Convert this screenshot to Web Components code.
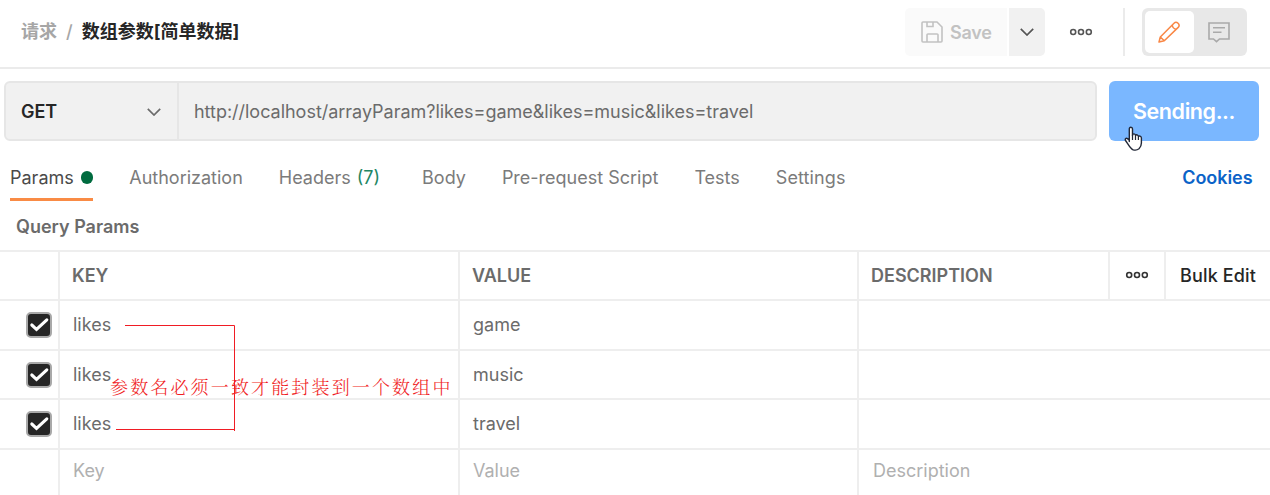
<!DOCTYPE html>
<html lang="zh-CN">
<head>
<meta charset="utf-8">
<title>数组参数</title>
<style>
html,body{margin:0;height:495px;overflow:hidden;background:#fff}
body{font:400 18px/24px Inter,"Noto Sans CJK SC",sans-serif;color:#6b6b6b}
</style>
</head>
<body>
<request-page></request-page>
<script>
const define = (name, css, html) => {
  const t = document.createElement('template');
  t.innerHTML = `<style>*{box-sizing:border-box}:host{box-sizing:border-box}${css}</style>${html}`;
  customElements.define(name, class extends HTMLElement {
    constructor() {
      super();
      this.attachShadow({ mode: 'open' }).appendChild(t.content.cloneNode(true));
    }
  });
};

define('more-dots', ':host{display:block;width:24px;height:10px}svg{display:block}',
  `<svg width="24" height="10" fill="none" stroke="currentColor" stroke-width="1.6"><circle cx="4.2" cy="5" r="2.5"/><circle cx="12" cy="5" r="2.5"/><circle cx="19.8" cy="5" r="2.5"/></svg>`);

define('chevron-icon', ':host{display:block;width:14px;height:8px}svg{display:block}',
  `<svg width="14" height="8" fill="none" stroke="currentColor" stroke-width="1.7"><path d="M.8.8 7 7 13.2.8"/></svg>`);

define('save-group', `
  :host{display:flex;width:140px;height:48px;border-radius:5px;overflow:hidden}
  .save{width:102px;background:#fafafa;color:#c2c2c2;display:flex;align-items:center;padding-left:16px;gap:7px;font-weight:600;letter-spacing:-.25px}
  .save span{padding-top:1px}
  .gap{width:2px;background:#fff}
  .drop{flex:1;background:#f1f1f1;color:#555;display:flex;align-items:center;justify-content:center}`,
  `<div class="save"><svg width="22" height="22" fill="none" stroke="currentColor" stroke-width="1.6"><path d="M2 1H16L21 6V20Q21 21 20 21H2Q1 21 1 20V2Q1 1 2 1ZM6 1V5.5H12V1M6 21V13.8Q6 13 7 13H16Q17 13 17 13.8V21"/></svg><span>Save</span></div><div class="gap"></div><div class="drop"><chevron-icon></chevron-icon></div>`);

define('mode-switch', `
  :host{display:flex;width:105px;height:48px;padding:3px;border-radius:6px;background:#e8e8e8}
  div{flex:1;display:flex;align-items:center;justify-content:center;border-radius:5px}
  .on{background:#fff;flex:none;width:49px;padding-right:2px}`,
  `<div class="on"><svg width="24" height="24" fill="none" stroke="#f98745" stroke-width="1.5" stroke-linejoin="round"><path d="M2 22 3.3 17 17 3.3C19.6.7 23.8 4.6 21.2 7.4L7.3 20.8ZM15.3 5Q15.6 8.7 19.3 9.2M3.3 17 7.3 20.8"/></svg></div>
   <div><svg width="22" height="22" fill="none" stroke="#a9a9a9" stroke-width="1.6"><path d="M1 2H21V18H11.5L8.5 20.7 5.5 18H1ZM5 6.8H17M5 11.3H13.5"/></svg></div>`);

define('request-header', `
  :host{display:flex;height:69px;border-bottom:2px solid #ebebeb;padding:8px 23px 0 21px;align-items:flex-start}
  .crumb{display:flex;font-weight:600;line-height:48px;font-size:18px;color:#a6a6a6;white-space:pre}
  .crumb i{font-style:normal;font-weight:500;margin:0 9px 0 9px}
  .crumb b{font-weight:700;color:#262626}
  .right{margin-left:auto;display:flex;align-items:center;height:48px}
  more-dots{margin-left:24px;color:#555}
  .rule{width:2px;height:48px;background:#ebebeb;margin:0 17px 0 30px}`,
  `<div class="crumb"><span>请求</span><i>/</i><b>数组参数[简单数据]</b></div>
   <div class="right"><save-group></save-group><more-dots></more-dots><div class="rule"></div><mode-switch></mode-switch></div>`);

define('hand-cursor', ':host{display:block}svg{display:block}',
  `<svg width="20" height="26" viewBox="0 0 20 26"><path d="M5.3 15.5V3Q5.3 1.2 6.9 1.2 8.5 1.2 8.5 3V9.5Q8.8 7.8 10 7.9 11.5 8 11.5 9.6 12 8.5 13.1 8.8 14.4 9.2 14.4 10.6 15 9.7 16.1 10.1 17.4 10.6 17.4 12V17Q17.4 20.4 15 22.8 12.5 24.8 9.2 23.8 6.8 22.6 3.8 17.8L1.5 14.5Q.8 13 2 12.3 3.2 11.8 5.3 14.3Z" fill="#fff" stroke="#222838" stroke-width="1.4" stroke-linejoin="round"/><path d="M8.5 9V14M11.5 10V14M14.4 11V14" stroke="#222838" stroke-width="1.2"/></svg>`);

define('url-bar', `
  :host{display:flex;gap:12px;padding:12px 11px 0 4px}
  .box{flex:1;height:60px;display:flex;border:2px solid #e6e6e6;border-radius:6px;background:#f1f1f1}
  .method{width:173px;border-right:2px solid #e6e6e6;display:flex;align-items:center;justify-content:space-between;padding:2px 16px 0 15px;color:#262626;font-weight:600;letter-spacing:-.1px}
  chevron-icon{color:#6b6b6b}
  .url{padding:1px 0 0 15px;line-height:56px;letter-spacing:-.02px}
  .send{position:relative;width:150px;height:60px;border-radius:6px;background:#7ab7ff;color:#fff;font:600 21.5px/60px Inter,sans-serif;text-align:center;letter-spacing:-.4px}
  hand-cursor{position:absolute;left:15px;top:45px}`,
  `<div class="box"><div class="method"><span>GET</span><chevron-icon></chevron-icon></div><div class="url">http://localhost/arrayParam?likes=game&amp;likes=music&amp;likes=travel</div></div>
   <div class="send">Sending...<hand-cursor></hand-cursor></div>`);

define('tab-item', `
  :host{display:flex;height:47px;padding-top:12px;gap:7px;white-space:nowrap;color:#7b7b7b}
  :host([active]){color:#4a4a4a;border-bottom:3px solid #f98b45}
  ::slotted(i){width:12.5px;height:12.5px;border-radius:50%;background:#006b3f;margin-top:5px}
  ::slotted(em){font-style:normal;color:#238664}`, `<slot></slot>`);

define('request-tabs', `
  :host{display:flex;height:60px;padding:13px 17.5px 0 10px;}
  tab-item{margin-right:36px}
  a{margin-left:auto;padding-top:12px;font-weight:600;color:#0b63c8;letter-spacing:-.05px}`,
  `<tab-item active><span>Params</span><i></i></tab-item><tab-item>Authorization</tab-item><tab-item><span>Headers</span><em style="margin-left:-1px">(7)</em></tab-item><tab-item style="margin-left:6px">Body</tab-item><tab-item style="margin-right:36px">Pre-request Script</tab-item><tab-item>Tests</tab-item><tab-item style="letter-spacing:.1px">Settings</tab-item><a>Cookies</a>`);

define('check-box', ':host{display:block;width:26px;height:26px}svg{display:block}',
  `<svg width="26" height="26"><rect x="1" y="1" width="24" height="24" rx="4" fill="#262626" stroke="#a9a9a9" stroke-width="2"/><path d="M5.8 13 10.5 17.3 20.8 7.8" fill="none" stroke="#fff" stroke-width="3.1" stroke-linecap="round"/></svg>`);

define('param-row', `
  :host{display:grid;grid-template-columns:60px 400px 399px 1fr;height:49.5px;border-bottom:2px solid #eee}
  div{border-right:2px solid #eee;padding-left:13px;line-height:48px}
  .check{padding:0 6px 0 0;display:flex;align-items:center;justify-content:flex-end}
  div:last-child{border:0;padding-left:14px}`,
  `<div class="check"><slot name="check"></slot></div><div><slot name="key"></slot></div><div><slot name="value"></slot></div><div><slot name="desc"></slot></div>`);

define('param-head', `
  :host{display:grid;grid-template-columns:60px 400px 399px 251px 56px 1fr;height:51px;border:solid #eee;border-width:2px 0;font-weight:600}
  div{border-right:2px solid #eee;padding-left:12px;line-height:47px}
  .dots{display:flex;align-items:center;justify-content:center;padding:0 0 1px;color:#333}
  div:last-child{border:0;padding-left:14px;color:#262626;white-space:nowrap;font-weight:500;letter-spacing:.15px}`,
  `<div></div><div>KEY</div><div>VALUE</div><div>DESCRIPTION</div><div class="dots"><more-dots></more-dots></div><div>Bulk Edit</div>`);

define('red-note', `
  :host{position:absolute;left:110px;top:320px;width:350px;height:115px;color:#f01c24}
  svg{display:block}
  span{position:absolute;left:0;top:53px;white-space:nowrap;font:300 18px/26px "Noto Serif CJK SC","Noto Sans CJK SC",sans-serif;letter-spacing:2.15px}`,
  `<svg width="126" height="112" fill="none" stroke="currentColor"><path d="M15 5.5H124.5V111M6 109.5H125"/></svg><span>参数名必须一致才能封装到一个数组中</span>`);

define('request-page', `
  :host{display:block;position:relative;width:1270px;height:495px;overflow:hidden}
  h2{margin:0;height:49px;padding:14px 16px 0;font:600 18px/24px Inter,sans-serif;color:#6b6b6b}
  .ghost{color:#b0b0b0}
  .ghost span{position:relative;top:-3px}`,
  `<request-header></request-header><url-bar></url-bar><request-tabs></request-tabs><h2>Query Params</h2>
   <param-head></param-head>
   ${['game', 'music', 'travel'].map(v => `<param-row><check-box slot="check"></check-box><span slot="key">likes</span><span slot="value">${v}</span></param-row>`).join('')}
   <param-row class="ghost"><span slot="key">Key</span><span slot="value">Value</span><span slot="desc">Description</span></param-row>
   <red-note></red-note>`);
</script>
</body>
</html>
